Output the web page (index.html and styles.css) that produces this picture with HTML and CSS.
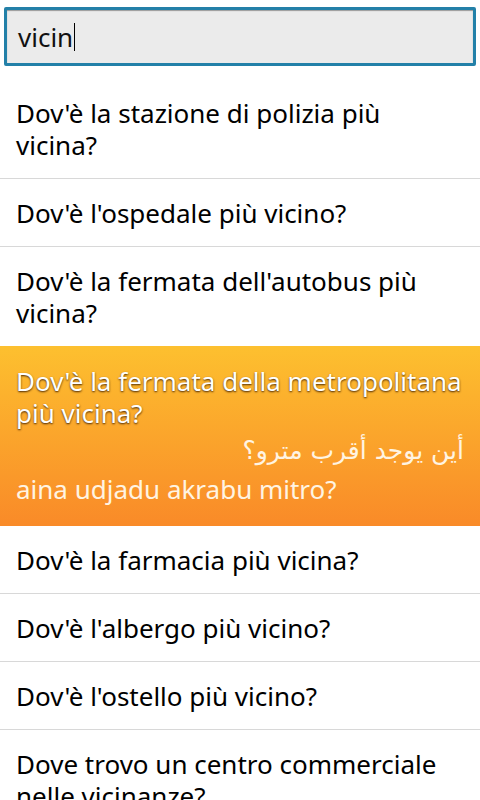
FILE: index.html
```html
<!DOCTYPE html>
<html lang="it">
<head>
<meta charset="utf-8">
<link rel="stylesheet" href="styles.css">
</head>
<body>
<div class="search">
  <div class="field"><span class="query">vicin</span><span class="caret"></span></div>
</div>
<ul class="list">
  <li class="item">Dov'è la stazione di polizia più vicina?</li>
  <li class="item">Dov'è l'ospedale più vicino?</li>
  <li class="item">Dov'è la fermata dell'autobus più vicina?</li>
  <li class="item selected">
    <div class="it">Dov'è la fermata della metropolitana più vicina?</div>
    <div class="ar" dir="rtl" lang="ar">أين يوجد أقرب مترو؟</div>
    <div class="tr">aina udjadu akrabu mitro?</div>
  </li>
  <li class="item">Dov'è la farmacia più vicina?</li>
  <li class="item">Dov'è l'albergo più vicino?</li>
  <li class="item">Dov'è l'ostello più vicino?</li>
  <li class="item">Dove trovo un centro commerciale nelle vicinanze?</li>
</ul>
</body>
</html>
```
FILE: styles.css
```css
html, body {
  margin: 0;
  padding: 0;
  background: #ffffff;
  width: 480px;
  height: 800px;
  overflow: hidden;
  font-family: "Noto Sans", "Open Sans", "DejaVu Sans", sans-serif;
  color: #000000;
}

.search {
  padding: 7px 4px 13px 4px;
}

.field {
  height: 53px;
  border: 3px solid #2380a8;
  border-radius: 2px;
  background: #ebebeb;
  box-shadow: inset 0 1px 1px rgba(0, 0, 0, 0.35);
  display: flex;
  align-items: center;
  padding-left: 11px;
  font-size: 26px;
}

.query {
  line-height: 30px;
  color: #111111;
}

.caret {
  width: 1px;
  height: 28px;
  background: #000000;
  margin-left: 1px;
}

.list {
  list-style: none;
  margin: 0;
  padding: 0;
}

.item {
  padding: 18px 16px 17px 16px;
  font-size: 26px;
  line-height: 32px;
  border-top: 1px solid #d8d8d8;
}

.item:first-child {
  border-top: none;
}

.selected {
  border-top: none;
  background: linear-gradient(#fdc02f, #f98a28);
  padding-top: 19px;
  padding-bottom: 21px;
}

.selected + .item {
  border-top: none;
}

.selected .it {
  color: #ffffff;
  text-shadow: 0 1px 2px rgba(60, 30, 0, 0.95);
}

.selected .ar {
  color: #fff4e2;
  text-align: right;
  line-height: 44px;
  font-family: "DejaVu Sans", sans-serif;
  font-size: 25px;
}

.selected .tr {
  color: #fff4e2;
  line-height: 32px;
}
```
